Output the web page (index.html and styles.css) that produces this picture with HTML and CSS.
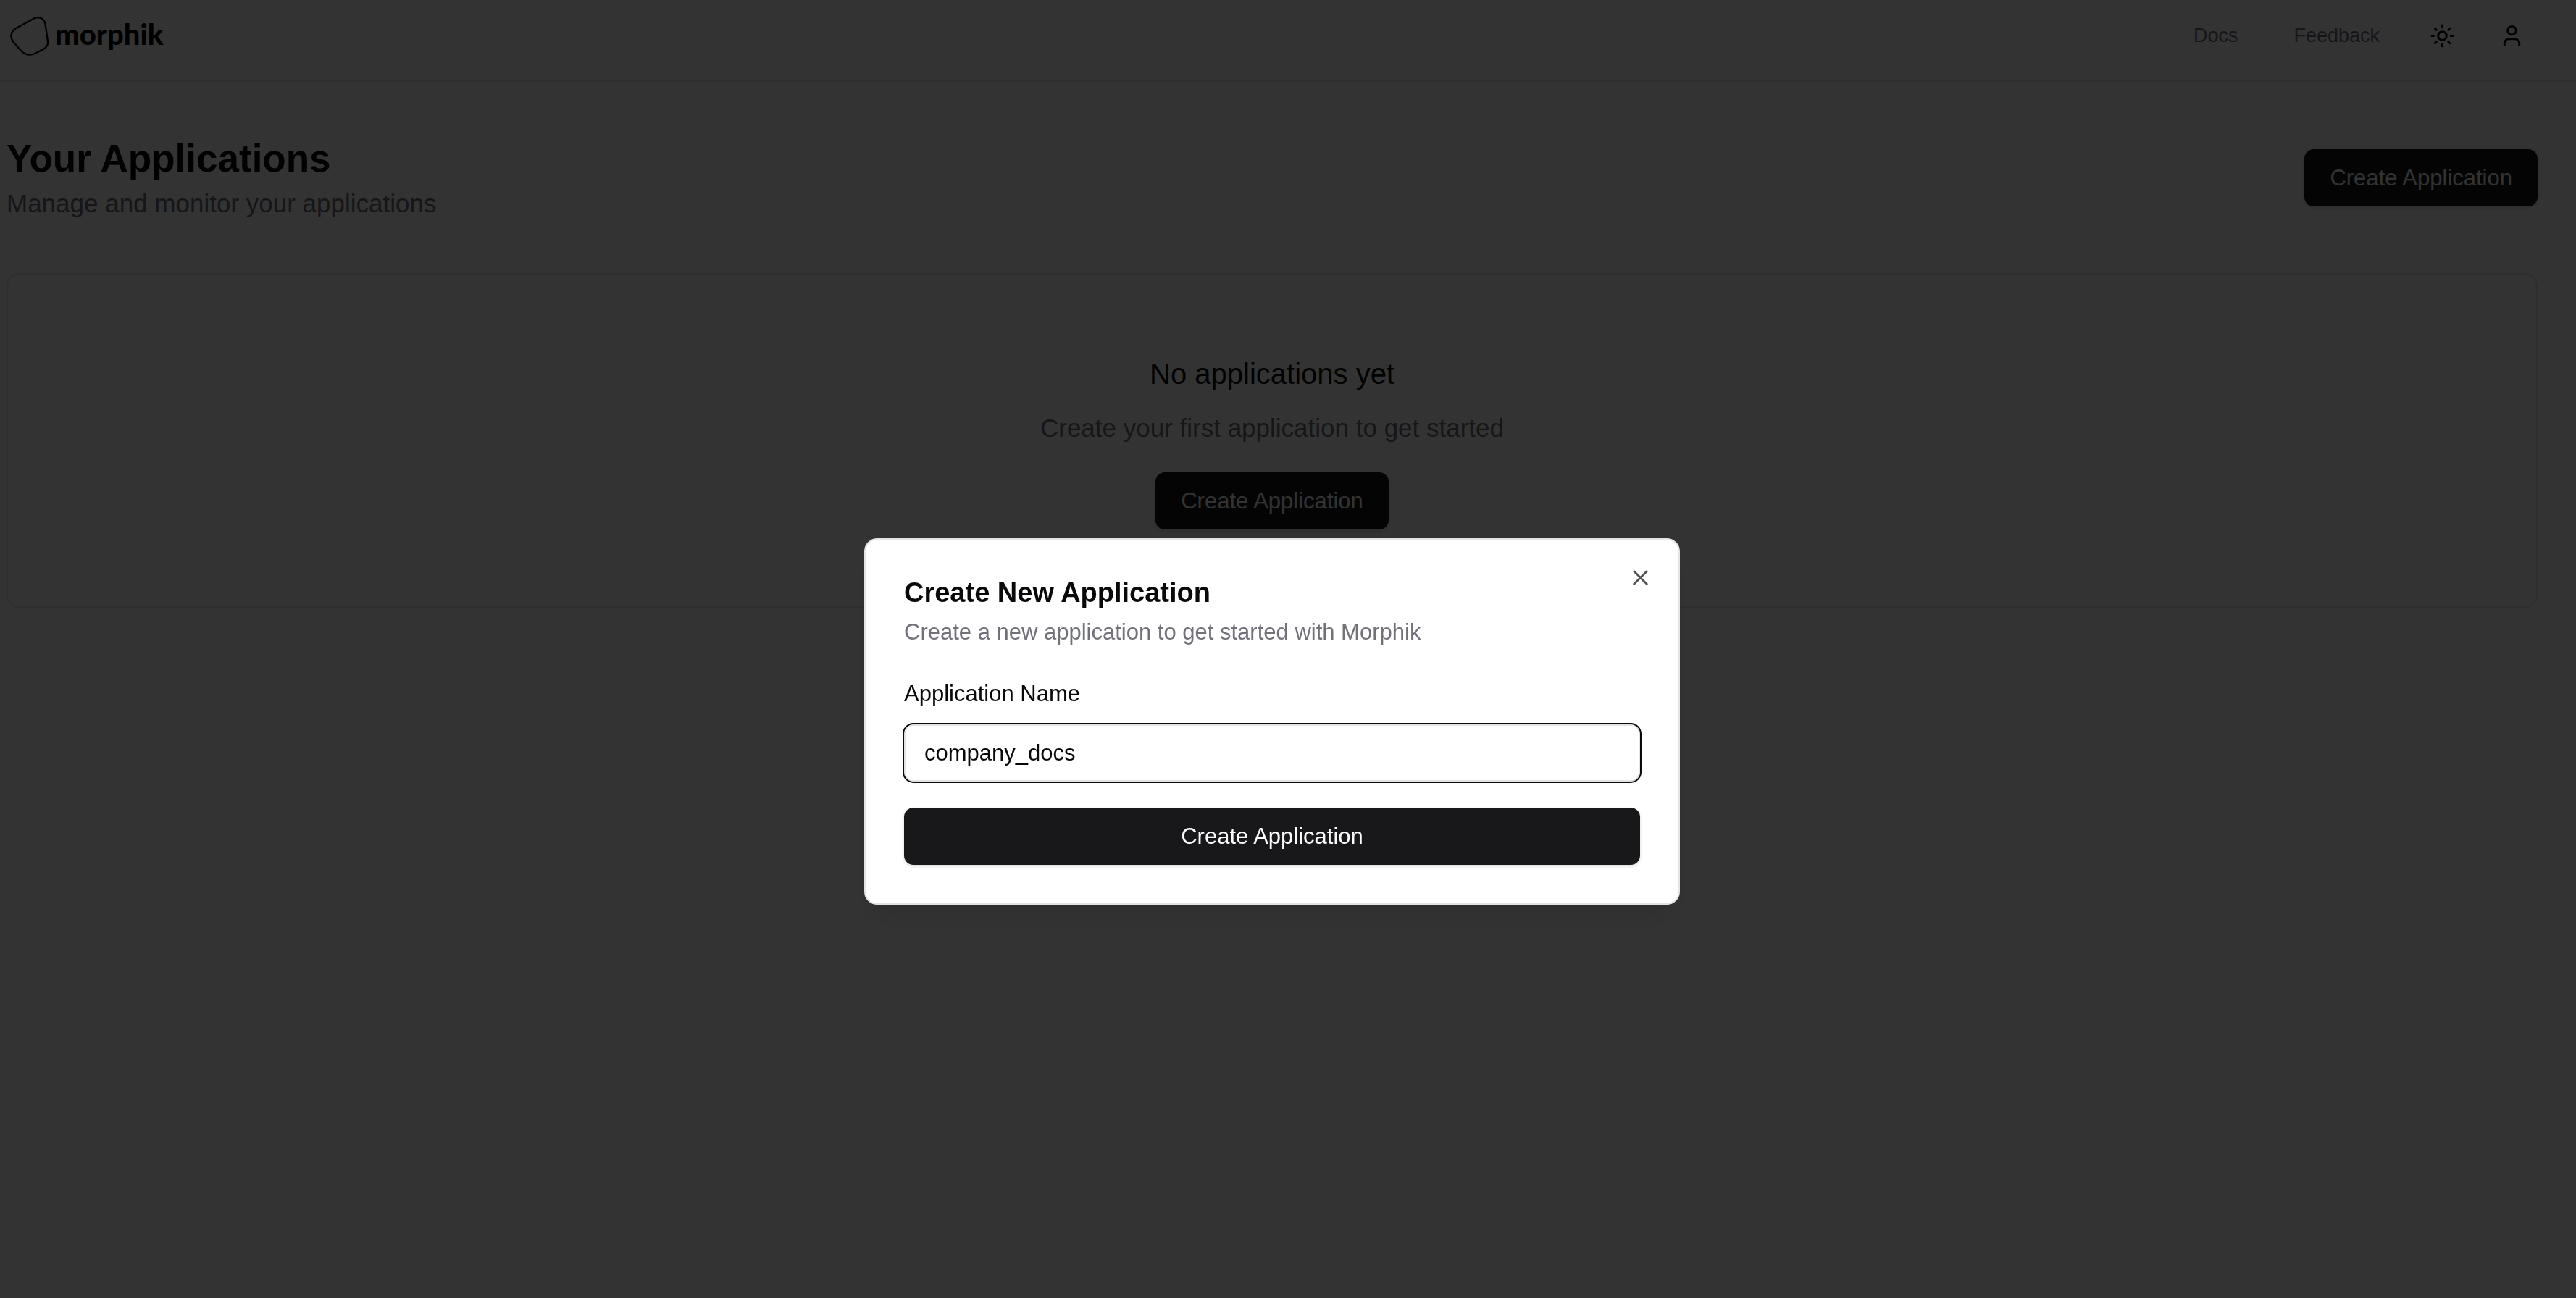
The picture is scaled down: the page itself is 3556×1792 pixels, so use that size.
FILE: index.html
```html
<!DOCTYPE html>
<html lang="en">
<head>
<meta charset="utf-8">
<meta name="viewport" content="width=device-width, initial-scale=1">
<title>Morphik</title>
<link rel="stylesheet" href="styles.css">
</head>
<body>
<div class="page">
  <header class="topbar">
    <a class="brand" href="#">
      <svg class="brand-mark" viewBox="0 1 56 56" aria-hidden="true"><path d="M8 18L33 4.500C40 1 47 4.500 48.500 12L52 36C52.500 41.500 50.500 44.500 46 47L34 53C26 56.500 19.500 54 14.500 48.500L4 36.500C-.500 30 1 22.500 8 18Z"/></svg>
      <span class="brand-name">morphik</span>
    </a>
    <nav class="nav">
      <a class="nav-link" href="#">Docs</a>
      <a class="nav-link" href="#">Feedback</a>
      <button class="icon-button" type="button" aria-label="Toggle theme">
        <svg class="icon" viewBox="0 0 24 24" aria-hidden="true"><circle cx="12" cy="12" r="4"/><path d="M12 2v2M12 20v2M4.930 4.930l1.410 1.410M17.660 17.660l1.410 1.410M2 12h2M20 12h2M6.340 17.660l-1.410 1.410M19.070 4.930l-1.410 1.410"/></svg>
      </button>
      <button class="icon-button" type="button" aria-label="Account">
        <svg class="icon" viewBox="0 0 24 24" aria-hidden="true"><path d="M19 21v-2a4 4 0 0 0-4-4H9a4 4 0 0 0-4 4v2"/><circle cx="12" cy="7" r="4"/></svg>
      </button>
    </nav>
  </header>
  <main class="content">
    <div class="page-head">
      <div>
        <h1 class="page-title">Your Applications</h1>
        <p class="text-muted">Manage and monitor your applications</p>
      </div>
      <button class="button" type="button">Create Application</button>
    </div>
    <section class="empty-card">
      <h2 class="empty-title">No applications yet</h2>
      <p class="text-muted">Create your first application to get started</p>
      <button class="button empty-action" type="button">Create Application</button>
    </section>
  </main>
</div>
<div class="overlay">
  <div class="dialog" role="dialog" aria-modal="true" aria-labelledby="dialog-title" aria-describedby="dialog-text">
    <h2 class="dialog-title" id="dialog-title">Create New Application</h2>
    <p class="dialog-text" id="dialog-text">Create a new application to get started with Morphik</p>
    <form class="form">
      <label class="label" for="app-name">Application Name</label>
      <input class="input" id="app-name" type="text" value="company_docs">
      <button class="button" type="button">Create Application</button>
    </form>
    <button class="close" type="button" aria-label="Close">
      <svg class="icon" viewBox="0 0 24 24" aria-hidden="true"><path d="M18 6L6 18M6 6l12 12"/></svg>
    </button>
  </div>
</div>
</body>
</html>
```
FILE: styles.css
```css
:root {
  --ink: #09090b;
  --primary: #18181b;
  --muted: #71717a;
  --line: #e4e4e7;
  --gutter: 44px;
}

* {
  box-sizing: border-box;
  margin: 0;
}

body {
  background: #fff;
  color: var(--ink);
  font-family: "Liberation Sans", Arial, sans-serif;
  font-size: 35px;
  line-height: 53px;
}

button,
input {
  font: inherit;
  color: inherit;
}

.topbar {
  display: flex;
  align-items: center;
  justify-content: space-between;
  padding: 10px 49px 22px 14px;
  border-bottom: 2px solid var(--line);
}

.brand {
  display: flex;
  align-items: center;
  gap: 6px;
  color: #000;
  text-decoration: none;
}

.brand-mark {
  width: 56px;
  height: 56px;
  fill: none;
  stroke: currentColor;
  stroke-width: 2.3;
}

.brand-name {
  padding-bottom: 6px;
  font-family: Lato, sans-serif;
  font-size: 40px;
  font-weight: 900;
  line-height: 44px;
}

.nav {
  display: flex;
  align-items: center;
  gap: 17px;
}

.nav-link {
  padding: 0 30px;
  color: var(--muted);
  font-size: 27px;
  line-height: 35px;
  text-decoration: none;
}

.icon-button {
  display: grid;
  place-items: center;
  width: 79px;
  height: 79px;
  padding: 0;
  border: 0;
  background: none;
}

.icon {
  width: 35px;
  height: 35px;
  fill: none;
  stroke: currentColor;
  stroke-width: 2;
  stroke-linecap: round;
  stroke-linejoin: round;
}

.content {
  padding: 71px calc(var(--gutter) + 9px) 71px 9px;
}

.page-head {
  display: flex;
  align-items: center;
  justify-content: space-between;
  margin-bottom: 70px;
}

.page-title {
  font-size: 53px;
  line-height: 70px;
}

.text-muted {
  color: var(--muted);
}

.button {
  height: 79px;
  padding: 0 35px;
  border: 0;
  border-radius: 13px;
  background: var(--primary);
  color: #fafafa;
  font-size: 31px;
  line-height: 44px;
  box-shadow: 0 2px 4px rgba(0, 0, 0, 0.15);
}

.empty-card {
  display: flex;
  flex-direction: column;
  align-items: center;
  padding: 106px;
  border: 2px solid var(--line);
  border-radius: 18px;
}

.empty-title {
  margin-bottom: 17px;
  font-size: 40px;
  font-weight: 400;
  line-height: 62px;
}

.empty-action {
  margin-top: 35px;
}

.overlay {
  position: fixed;
  inset: 0;
  display: flex;
  align-items: center;
  justify-content: center;
  padding: 200px var(--gutter) 0 0;
  background: rgba(0, 0, 0, 0.8);
}

.dialog {
  position: relative;
  width: 1126px;
  max-width: 100%;
  padding: 53px;
  border: 2px solid var(--line);
  border-radius: 18px;
  background: #fff;
  box-shadow: 0 22px 33px -7px rgba(0, 0, 0, 0.1), 0 9px 13px -9px rgba(0, 0, 0, 0.1);
}

.dialog-title {
  margin-bottom: 13px;
  font-size: 38px;
  line-height: 40px;
}

.dialog-text {
  margin-bottom: 47px;
  color: var(--muted);
  font-size: 31px;
  line-height: 44px;
}

.form {
  display: flex;
  flex-direction: column;
}

.label {
  margin-bottom: 27px;
  font-size: 31px;
  line-height: 31px;
}

.input {
  height: 79px;
  margin-bottom: 36px;
  padding: 0 26px;
  border: 2px solid var(--line);
  border-radius: 13px;
  outline: 2px solid var(--ink);
  background: #fff;
  font-size: 31px;
}

.close {
  position: absolute;
  top: 35px;
  right: 35px;
  display: grid;
  padding: 0;
  border: 0;
  background: none;
  opacity: 0.7;
}
```
